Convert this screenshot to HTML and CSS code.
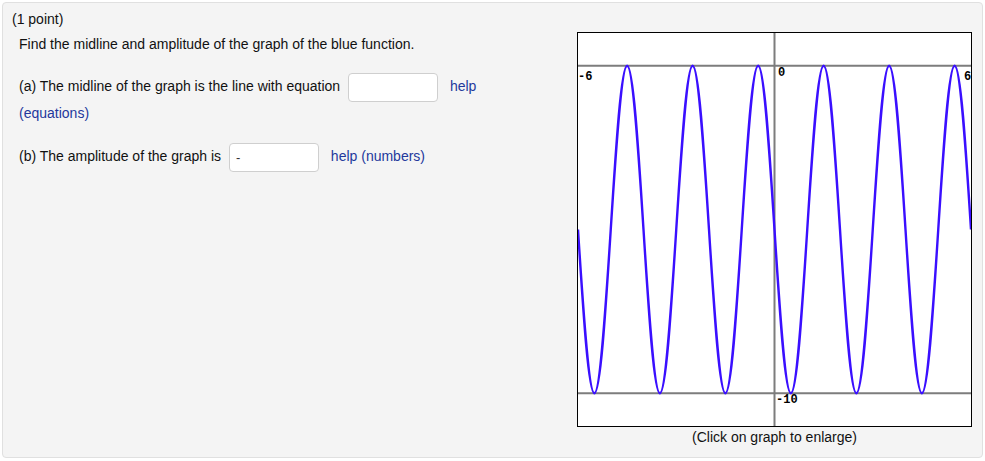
FILE: index.html
```html
<!DOCTYPE html>
<html lang="en">
<head>
<meta charset="utf-8">
<title>Midline and amplitude</title>
<link rel="stylesheet" href="styles.css">
</head>
<body>
<div class="problem">
  <div class="points">(1 point)</div>
  <div class="row">
    <div class="text">
      <p class="intro">Find the midline and amplitude of the graph of the blue function.</p>
      <p class="part part-a">(a) The midline of the graph is the line with equation <input class="answer answer-a" type="text" value=""> <a class="help" href="#">help (equations)</a></p>
      <p class="part part-b">(b) The amplitude of the graph is <input class="answer answer-b" type="text" value="-"> <a class="help" href="#">help (numbers)</a></p>
    </div>
    <figure class="graph">
      <svg class="plot" width="393" height="393" viewBox="0 0 393 393">
        <line x1="0" y1="32.75" x2="393" y2="32.75" class="grid"/>
        <line x1="0" y1="360.25" x2="393" y2="360.25" class="grid"/>
        <line x1="196.5" y1="0" x2="196.5" y2="393" class="grid"/>
        <text x="0" y="47" class="lbl">-6</text>
        <text x="200" y="43" class="lbl">0</text>
        <text x="386" y="47" class="lbl">6</text>
        <text x="198" y="370" class="lbl">-10</text>
        <path class="curve" d="M0 196.5
          c5.34 83.89 10.449 163.75 16.375 163.75 c5.926 0 11.035 -79.86 16.375 -163.75 c5.34 -83.89 10.449 -163.75 16.375 -163.75 c5.926 0 11.035 79.86 16.375 163.75
          c5.34 83.89 10.449 163.75 16.375 163.75 c5.926 0 11.035 -79.86 16.375 -163.75 c5.34 -83.89 10.449 -163.75 16.375 -163.75 c5.926 0 11.035 79.86 16.375 163.75
          c5.34 83.89 10.449 163.75 16.375 163.75 c5.926 0 11.035 -79.86 16.375 -163.75 c5.34 -83.89 10.449 -163.75 16.375 -163.75 c5.926 0 11.035 79.86 16.375 163.75
          c5.34 83.89 10.449 163.75 16.375 163.75 c5.926 0 11.035 -79.86 16.375 -163.75 c5.34 -83.89 10.449 -163.75 16.375 -163.75 c5.926 0 11.035 79.86 16.375 163.75
          c5.34 83.89 10.449 163.75 16.375 163.75 c5.926 0 11.035 -79.86 16.375 -163.75 c5.34 -83.89 10.449 -163.75 16.375 -163.75 c5.926 0 11.035 79.86 16.375 163.75
          c5.34 83.89 10.449 163.75 16.375 163.75 c5.926 0 11.035 -79.86 16.375 -163.75 c5.34 -83.89 10.449 -163.75 16.375 -163.75 c5.926 0 11.035 79.86 16.375 163.75"/>
      </svg>
      <figcaption class="caption">(Click on graph to enlarge)</figcaption>
    </figure>
  </div>
</div>
</body>
</html>
```

FILE: styles.css
```css
html, body {
  margin: 0;
  padding: 0;
  background: #ffffff;
}

body {
  padding: 2px;
  font-family: "Liberation Sans", Arial, Helvetica, sans-serif;
  font-size: 14px;
  color: #111111;
}

.problem {
  box-sizing: border-box;
  width: 981px;
  height: 456px;
  border: 1px solid #e0e0e0;
  border-radius: 4px;
  background: #f4f4f4;
  padding: 8px 10px 0 9px;
}

.points {
  line-height: 16px;
}

.row {
  display: flex;
  align-items: flex-start;
  margin-top: 5px;
}

.text {
  width: 490px;
  margin-left: 7px;
  padding-top: 4px;
}

.intro {
  margin: 0;
  line-height: 16px;
}

.part {
  margin: 0;
  line-height: 22px;
}

.text .part-a {
  margin-top: 21px;
}

.text .part-b {
  margin-top: 19px;
}

.answer {
  box-sizing: border-box;
  height: 29px;
  margin: 0 4px 0 4px;
  padding: 0 6px;
  border: 1px solid #cfcfcf;
  border-radius: 4px;
  background: #ffffff;
  font-family: "Liberation Sans", Arial, sans-serif;
  font-size: 13px;
  color: #333333;
  vertical-align: middle;
}

.answer-a {
  width: 90px;
}

.answer-b {
  width: 90px;
}

.help {
  color: #23389c;
  text-decoration: none;
  margin-left: 4px;
}

.graph {
  margin: 0 0 0 auto;
  width: 395px;
}

.plot {
  display: block;
  border: 1px solid #000000;
  background: #ffffff;
}

.grid {
  stroke: #7d7d7d;
  stroke-width: 2;
}

.lbl {
  font-family: "Liberation Mono", "DejaVu Sans Mono", monospace;
  font-weight: bold;
  font-size: 12px;
  fill: #000000;
}

.curve {
  fill: none;
  stroke: #3a0fff;
  stroke-width: 2.4;
}

.caption {
  text-align: center;
  line-height: 16px;
  margin-top: 2px;
}
```
